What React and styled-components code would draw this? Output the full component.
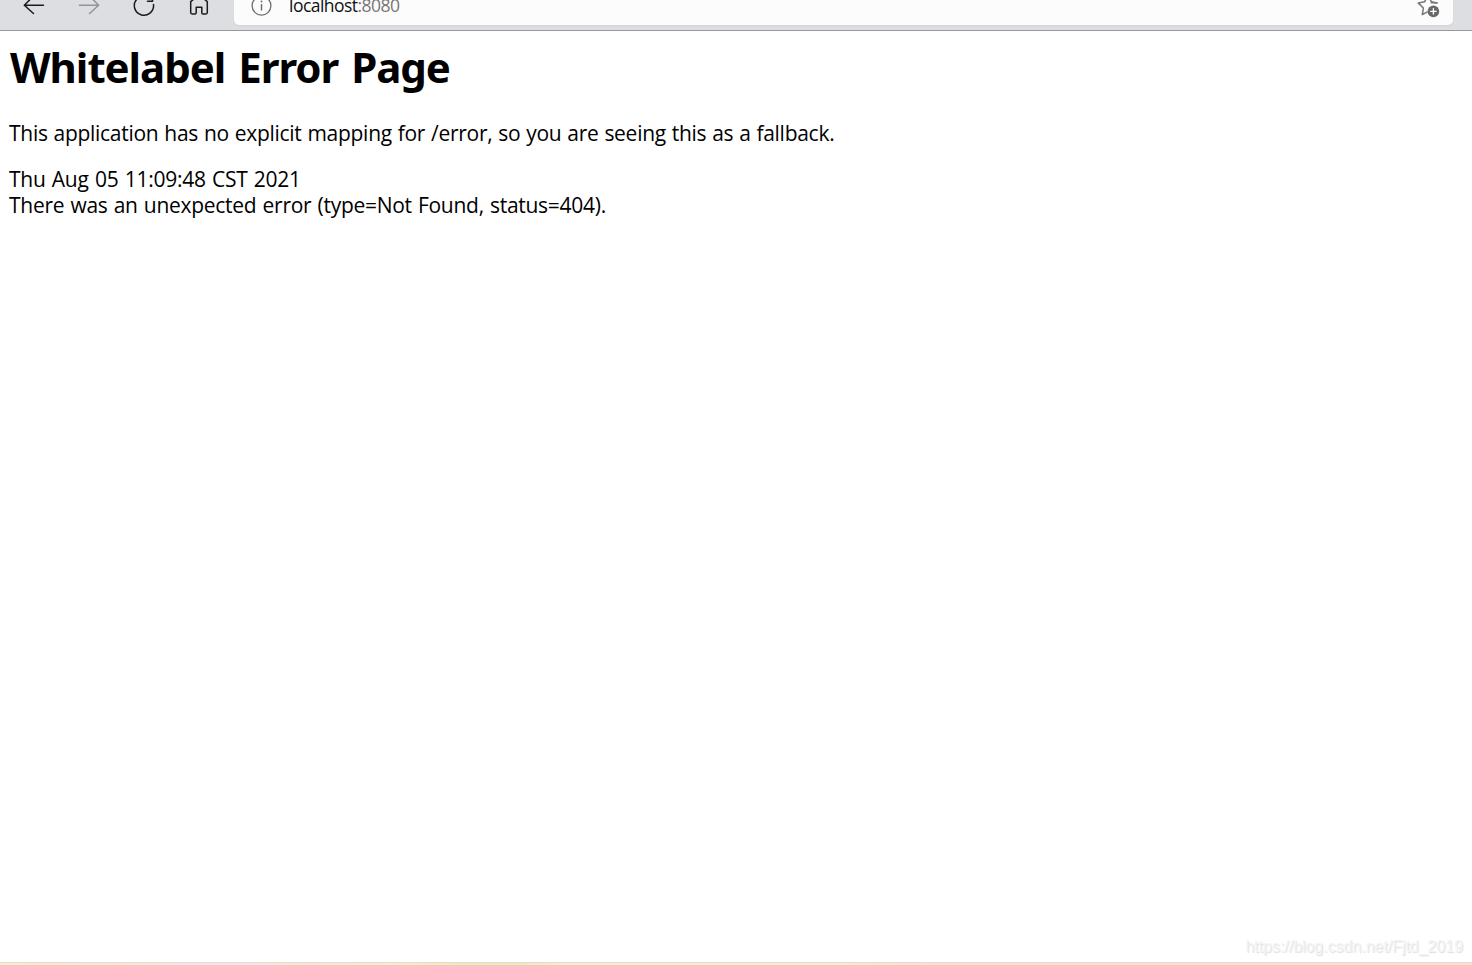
import React from 'react';
import styled, { createGlobalStyle } from 'styled-components';

const GlobalStyle = createGlobalStyle`
  body {
    margin: 0;
    background: #fff;
    overflow: hidden;
  }
`;

const Window = styled.div`
  display: flex;
  flex-direction: column;
  height: 100vh;
  overflow: hidden;
`;

const Toolbar = styled.header`
  display: flex;
  align-items: flex-start;
  box-sizing: border-box;
  flex: none;
  height: 31px;
  padding: 0 19px 0 20px;
  background: #dddee2;
  border-bottom: 1px solid #97989a;
`;

const NavButtons = styled.nav`
  display: flex;
  gap: 27px;
  width: 214px;
`;

const Icon = styled.svg`
  display: block;
  flex: none;
  fill: none;
  stroke: ${(props) => props.$color || '#1b1b1b'};
  stroke-width: 1.5;
  stroke-linecap: round;
  stroke-linejoin: round;
`;

const AddressBar = styled.div`
  display: flex;
  align-items: flex-start;
  flex: 1;
  height: 25px;
  box-sizing: border-box;
  padding: 0 12px 0 16px;
  background: #fcfcfc;
  border-radius: 0 0 5px 5px;
  box-shadow: 0 1px 2px rgba(0, 0, 0, 0.06);
`;

const Url = styled.span`
  flex: 1;
  margin-left: 11px;
  font-family: 'Open Sans', 'Noto Sans', sans-serif;
  font-size: 17.5px;
  line-height: 11px;
  letter-spacing: -0.53px;
  color: #111;
`;

const Port = styled.span`
  color: #757575;
`;

const Content = styled.main`
  flex: 1;
  padding: 6px 9px 0;
  font-family: 'Open Sans', 'Noto Sans', sans-serif;
  font-size: 21px;
  line-height: 26px;
  color: #000;
`;

const Title = styled.h1`
  margin: 0 0 24px;
  padding-left: 1px;
  font-family: 'Noto Sans', 'Open Sans', sans-serif;
  font-size: 42px;
  line-height: 59px;
  font-weight: 700;
  white-space: nowrap;
  letter-spacing: -1.03px;
  word-spacing: 3px;
`;

const Line = styled.div`
  white-space: nowrap;
  letter-spacing: -0.28px;
  word-spacing: ${(props) => props.$gap}px;
`;

const Message = styled(Line)`
  margin-bottom: 20px;
`;

const Watermark = styled.footer`
  padding-right: 9px;
  height: 24px;
  font-family: 'Liberation Sans', Arial, sans-serif;
  font-size: 16px;
  line-height: 18px;
  letter-spacing: -0.04px;
  text-align: right;
  color: #f4f4f4;
  text-shadow: 1px 1px 1px #dedede;
`;

const BottomEdge = styled.div`
  flex: none;
  height: 2px;
  border-top: 1px solid #e3dbd0;
  background: linear-gradient(
    90deg,
    #fdebd0 0,
    #fce8d2 130px,
    #f6e8e3 175px,
    #f6e8e3 250px,
    #fbe7d2 300px,
    #fcebd0 390px,
    #f6edc2 420px,
    #e8efb8 455px,
    #e6efb8 520px,
    #fcebd0 560px,
    #fdebd0 840px,
    #fae3cd 930px,
    #fae3cd 100%
  );
`;

const App = () => {
  return (
    <Window>
      <GlobalStyle />
      <Toolbar>
        <NavButtons>
          <Icon width="28" height="20" viewBox="20 0 28 20">
            <path d="M43.5 5.3H24.5M33.5-4L24.3 5.3L33.5 13.5" />
          </Icon>
          <Icon width="28" height="20" viewBox="75 0 28 20" $color="#929397">
            <path d="M79.5 5.3H98.5M89.5-4L98.7 5.3L89.5 13.5" />
          </Icon>
          <Icon width="28" height="20" viewBox="130 0 28 20">
            <path d="M136.9-0.9A9.6 9.6 0 1 0 153.5 4.6M147.5 1.3H152.5V-5" />
          </Icon>
          <Icon width="28" height="20" viewBox="185 0 28 20">
            <path d="M190.7 1.6L199-5L207.3 1.6V12.6Q207.3 14 205.9 14H203.1Q201.8 14 201.8 12.7V7.2H196.2V12.7Q196.2 14 194.9 14H192.1Q190.7 14 190.7 12.6Z" />
          </Icon>
        </NavButtons>
        <AddressBar>
          <Icon width="28" height="20" viewBox="250 0 28 20" $color="#6b6b6b">
            <circle cx="261.5" cy="5.7" r="9.4" strokeWidth="1.3" />
            <path d="M261.5 4.6V10" strokeWidth="1.4" />
            <circle cx="261.5" cy="1.5" r="0.9" fill="#6b6b6b" stroke="none" />
          </Icon>
          <Url>
            localhost<Port>:8080</Port>
          </Url>
          <Icon width="28" height="22" viewBox="1413 0 28 22" $color="#757575">
            <path d="M1437 3L1431.3 1.7L1428-5M1424.6 1.8L1418.3 3.1L1423.4 8L1422.3 14.6L1427 12.1M1424.6 1.8L1428-5" />
            <path d="M1431.3 2.8H1436.8" />
            <circle cx="1433.4" cy="11.4" r="5.8" fill="#686868" stroke="none" />
            <path d="M1433.4 8.7V14.1M1430.7 11.4H1436.1" stroke="#fff" strokeWidth="1.4" />
          </Icon>
        </AddressBar>
      </Toolbar>

      <Content>
        <Title>Whitelabel Error Page</Title>
        <Message $gap={0.7}>
          This application has no explicit mapping for /error, so you are seeing this as a fallback.
        </Message>
        <Line $gap={1.2}>Thu Aug 05 11:09:48 CST 2021</Line>
        <Line $gap={1}>There was an unexpected error (type=Not Found, status=404).</Line>
      </Content>

      <Watermark>https://blog.csdn.net/Fjtd_2019</Watermark>
      <BottomEdge />
    </Window>
  );
};

export default App;
